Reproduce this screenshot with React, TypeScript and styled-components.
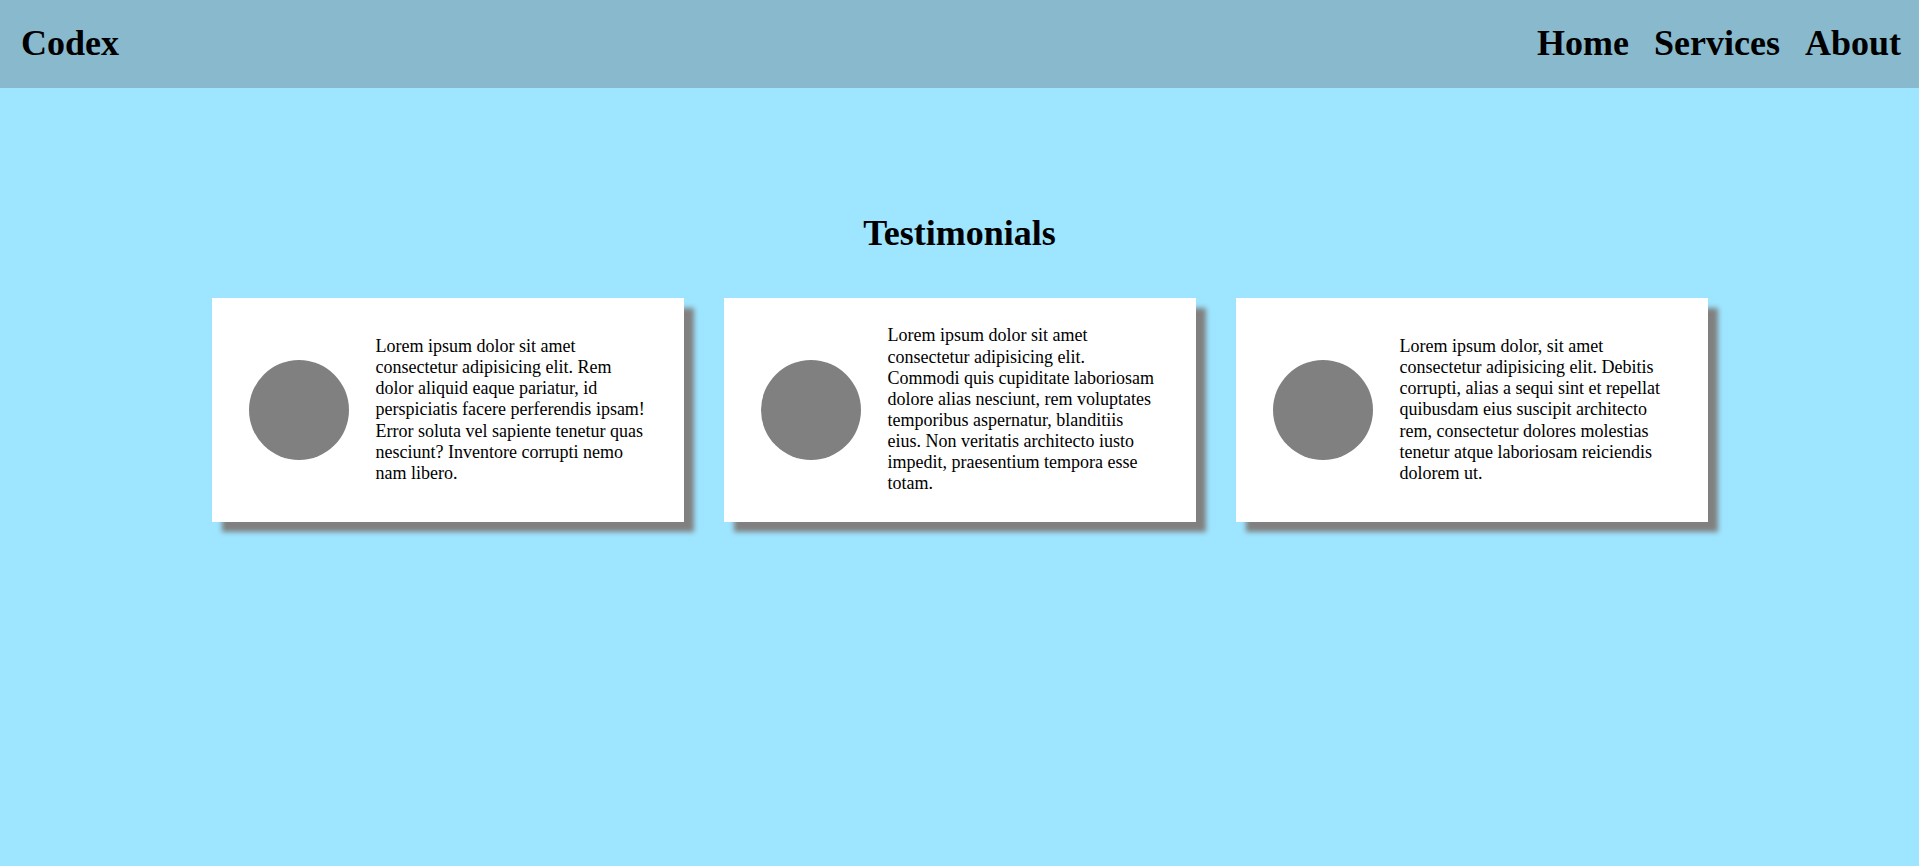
import React from 'react';
import styled, { createGlobalStyle } from 'styled-components';

const GlobalStyle = createGlobalStyle`
    * {
        box-sizing: border-box;
    }
    body {
        margin: 0;
        background-color: #9ee5ff;
        font-family: "Liberation Serif", "Times New Roman", serif;
        color: #000;
    }
`;

const Page = styled.div`
    min-height: 100vh;
`;

const HeaderWrapper = styled.header`
    width: 100%;
    height: 88px;
    padding: 0 18px 2px 21px;
    display: flex;
    flex-direction: row;
    align-items: center;
    justify-content: space-between;
    background-color: #89b9cc;
`;

const Brand = styled.div`
    font-size: 36px;
    font-weight: bold;
`;

const NavList = styled.nav`
    display: flex;
    gap: 25px;
`;

const NavLink = styled.a`
    font-size: 36px;
    font-weight: bold;
    color: #000;
    text-decoration: none;
    cursor: pointer;
`;

const Section = styled.section`
    padding: 124px 0 60px;
    display: flex;
    flex-direction: column;
    align-items: center;
`;

const Title = styled.h2`
    margin: 0;
    font-size: 36px;
    font-weight: bold;
`;

const CardRow = styled.div`
    margin-top: 44px;
    display: flex;
    gap: 40px;
    justify-content: center;
`;

const Card = styled.div`
    width: 472px;
    height: 224px;
    padding: 0 37px;
    display: flex;
    align-items: center;
    gap: 27px;
    background-color: #fff;
    box-shadow: 10px 10px 5px gray;
`;

const Avatar = styled.div`
    width: 100px;
    height: 100px;
    flex-shrink: 0;
    border-radius: 50%;
    background-color: gray;
`;

const Quote = styled.p`
    margin: 0;
    width: 271px;
    font-size: 18px;
    line-height: 21.15px;
`;

const testimonials = [
    'Lorem ipsum dolor sit amet consectetur adipisicing elit. Rem dolor aliquid eaque pariatur, id perspiciatis facere perferendis ipsam! Error soluta vel sapiente tenetur quas nesciunt? Inventore corrupti nemo nam libero.',
    'Lorem ipsum dolor sit amet consectetur adipisicing elit. Commodi quis cupiditate laboriosam dolore alias nesciunt, rem voluptates temporibus aspernatur, blanditiis eius. Non veritatis architecto iusto impedit, praesentium tempora esse totam.',
    'Lorem ipsum dolor, sit amet consectetur adipisicing elit. Debitis corrupti, alias a sequi sint et repellat quibusdam eius suscipit architecto rem, consectetur dolores molestias tenetur atque laboriosam reiciendis dolorem ut.',
];

const App: React.FC = () => {
    return (
        <Page>
            <GlobalStyle />
            <HeaderWrapper>
                <Brand>Codex</Brand>
                <NavList>
                    <NavLink>Home</NavLink>
                    <NavLink>Services</NavLink>
                    <NavLink>About</NavLink>
                </NavList>
            </HeaderWrapper>
            <Section>
                <Title>Testimonials</Title>
                <CardRow>
                    {testimonials.map((text, i) => (
                        <Card key={i}>
                            <Avatar />
                            <Quote>{text}</Quote>
                        </Card>
                    ))}
                </CardRow>
            </Section>
        </Page>
    );
};

export default App;
